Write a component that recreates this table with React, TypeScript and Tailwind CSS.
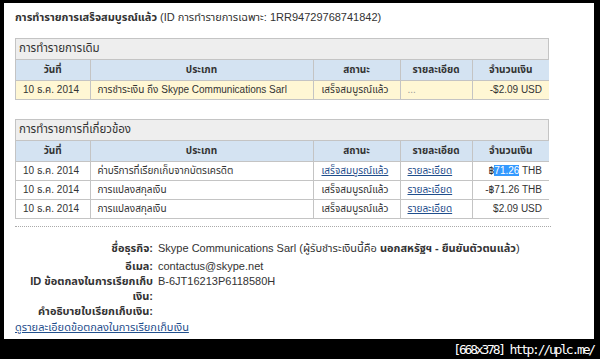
type Row = {
  date: string;
  type: string;
  status: string;
  statusLink?: boolean;
  detail: string;
  detailLink?: boolean;
  amount: React.ReactNode;
};

const cols = ["w-[74px]", "w-[223px]", "w-[87px]", "w-[72px]", "w-[77px]"];
const heads = ["วันที่", "ประเภท", "สถานะ", "รายละเอียด", "จำนวนเงิน"];

function TxBox({ title, rows, highlight }: { title: string; rows: Row[]; highlight?: boolean }) {
  return (
    <div className="w-[534px] border border-[#c4c4c4]">
      <div className="flex h-[21px] items-center border-b border-[#c4c4c4] bg-[#eeeeee] px-[3px] text-[11.5px] text-[#333]">
        {title}
      </div>
      <table className="w-full table-fixed border-collapse text-[10px] text-[#333]">
        <colgroup>
          {cols.map((c) => (
            <col key={c} className={c} />
          ))}
        </colgroup>
        <thead>
          <tr className="h-[20px] bg-[#d4e3f2]">
            {heads.map((h, i) => (
              <th
                key={h}
                className={`text-center text-[10px] font-bold ${i < 4 ? "border-r border-[#c4c4c4]" : ""}`}
              >
                {h}
              </th>
            ))}
          </tr>
        </thead>
        <tbody>
          {rows.map((r, idx) => (
            <tr key={idx} className={`h-[19px] ${highlight ? "bg-[#fff7d4]" : "bg-white"}`}>
              <td className="border-r border-t border-[#c4c4c4] pl-[7px]">{r.date}</td>
              <td className="border-r border-t border-[#c4c4c4] pl-[7px]">{r.type}</td>
              <td className="border-r border-t border-[#c4c4c4] pl-[8px]">
                {r.statusLink ? <a className="text-[#1f4e8c] underline">{r.status}</a> : r.status}
              </td>
              <td className="border-r border-t border-[#c4c4c4] pl-[7px]">
                {r.detailLink ? (
                  <a className="text-[#1f4e8c] underline">{r.detail}</a>
                ) : (
                  <span className="text-[#999]">{r.detail}</span>
                )}
              </td>
              <td className="border-t border-[#c4c4c4] pr-[7px] text-right">{r.amount}</td>
            </tr>
          ))}
        </tbody>
      </table>
    </div>
  );
}

export default function App() {
  const font = { fontFamily: "Tahoma, 'Liberation Sans', 'Noto Sans Thai', sans-serif" };
  return (
    <div className="flex h-[359px] w-[600px] flex-col bg-black" style={font}>
      <div className="ml-[4px] mr-[6px] mt-[3px] h-[336px] bg-white px-[11px] pt-[6px]">
        <p className="text-[11px] leading-[16px] text-[#333]">
          <span className="font-bold">การทำรายการเสร็จสมบูรณ์แล้ว</span> (ID การทำรายการเฉพาะ: 1RR94729768741842)
        </p>

        <div className="mt-[13px]">
          <TxBox
            title="การทำรายการเดิม"
            highlight
            rows={[
              {
                date: "10 ธ.ค. 2014",
                type: "การชำระเงิน ถึง Skype Communications Sarl",
                status: "เสร็จสมบูรณ์แล้ว",
                detail: "...",
                amount: "-$2.09 USD",
              },
            ]}
          />
        </div>

        <div className="mt-[19px]">
          <TxBox
            title="การทำรายการที่เกี่ยวข้อง"
            rows={[
              {
                date: "10 ธ.ค. 2014",
                type: "ค่าบริการที่เรียกเก็บจากบัตรเครดิต",
                status: "เสร็จสมบูรณ์แล้ว",
                statusLink: true,
                detail: "รายละเอียด",
                detailLink: true,
                amount: (
                  <>
                    ฿<span className="bg-[#3399ff] text-white">71.26</span> THB
                  </>
                ),
              },
              {
                date: "10 ธ.ค. 2014",
                type: "การแปลงสกุลเงิน",
                status: "เสร็จสมบูรณ์แล้ว",
                detail: "รายละเอียด",
                detailLink: true,
                amount: "-฿71.26 THB",
              },
              {
                date: "10 ธ.ค. 2014",
                type: "การแปลงสกุลเงิน",
                status: "เสร็จสมบูรณ์แล้ว",
                detail: "รายละเอียด",
                detailLink: true,
                amount: "$2.09 USD",
              },
            ]}
          />
        </div>

        <div className="mt-[7px] w-[536px] border-t border-dotted border-[#aaa]" />

        <div className="grid grid-cols-[138px_1fr] gap-x-[5px] pt-[14px] text-[11px] leading-[15px] text-[#333]">
          <div className="mb-[3px] text-right font-bold">ชื่อธุรกิจ:</div>
          <div className="mb-[3px]">
            Skype Communications Sarl (ผู้รับชำระเงินนี้คือ <span className="font-bold">นอกสหรัฐฯ - ยืนยันตัวตนแล้ว</span>)
          </div>
          <div className="text-right font-bold">อีเมล:</div>
          <div>contactus@skype.net</div>
          <div className="text-right font-bold">ID ข้อตกลงในการเรียกเก็บเงิน:</div>
          <div>B-6JT16213P6118580H</div>
          <div className="text-right font-bold">คำอธิบายใบเรียกเก็บเงิน:</div>
          <div />
        </div>
        <a className="mt-px block text-[11px] leading-[15px] text-[#1f4e8c] underline">
          ดูรายละเอียดข้อตกลงในการเรียกเก็บเงิน
        </a>
      </div>
      <div className="flex flex-1 items-center justify-end pr-[6px]">
        <span
          className="text-[13px] leading-none tracking-[-2.2px] text-white"
          style={{ fontFamily: "'DejaVu Sans Mono', monospace" }}
        >
          [668x378] http://uplc.me/
        </span>
      </div>
    </div>
  );
}
